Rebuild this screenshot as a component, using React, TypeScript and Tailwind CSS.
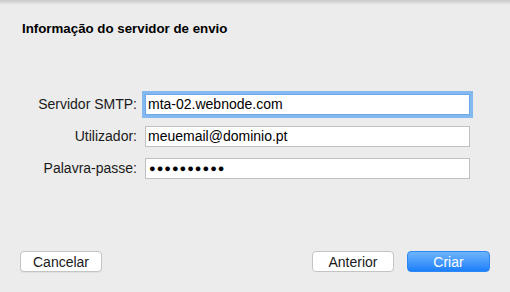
export default function App() {
  return (
    <div className="relative w-[510px] h-[292px] bg-[#ececec] overflow-hidden font-['Liberation_Sans',Arial,sans-serif] text-[14px] text-[#1a1a1a]">
      <div className="absolute inset-x-0 top-0 h-[5px] bg-gradient-to-b from-[#c8c8c8] to-[#ececec]" />
      <div className="flex flex-col pl-[22px] pt-[21px]">
        <h1 className="font-bold text-[13.3px] leading-[16px] text-black">Informação do servidor de envio</h1>
      </div>
      <div className="flex flex-col gap-[11px] mt-[57px]">
        <div className="flex items-center">
          <label className="w-[137px] text-right">Servidor SMTP:</label>
          <div className="ml-[8px] w-[325px] h-[21px] bg-white border border-[#6fa8e6] ring-[3px] ring-[#84b9ef] flex items-center pl-[2px] text-black">
            mta-02.webnode.com
          </div>
        </div>
        <div className="flex items-center">
          <label className="w-[137px] text-right">Utilizador:</label>
          <div className="ml-[8px] w-[325px] h-[21px] bg-white border border-[#c0c0c0] flex items-center pl-[2px] text-black">
            meuemail@dominio.pt
          </div>
        </div>
        <div className="flex items-center">
          <label className="w-[137px] text-right">Palavra-passe:</label>
          <div className="ml-[8px] w-[325px] h-[21px] bg-white border border-[#c0c0c0] flex items-center pl-[3px] text-black text-[11px] tracking-[1px]">
            ●●●●●●●●●●
          </div>
        </div>
      </div>
      <div className="flex items-center mt-[72px] pl-[20px] pr-[20px]">
        <button className="w-[82px] h-[21px] bg-white border border-[#c4c4c4] rounded-[4px] shadow-[0_1px_0_rgba(0,0,0,0.05)] text-[14px] text-[#1a1a1a] leading-none">
          Cancelar
        </button>
        <div className="flex-1" />
        <button className="w-[82px] h-[21px] bg-white border border-[#c4c4c4] rounded-[4px] text-[14px] text-[#1a1a1a] leading-none">
          Anterior
        </button>
        <button className="ml-[13px] w-[83px] h-[21px] rounded-[4px] bg-gradient-to-b from-[#6db4fb] to-[#1a7ffb] border border-[#2d87f5] text-white text-[14px] leading-none">
          Criar
        </button>
      </div>
    </div>
  );
}
